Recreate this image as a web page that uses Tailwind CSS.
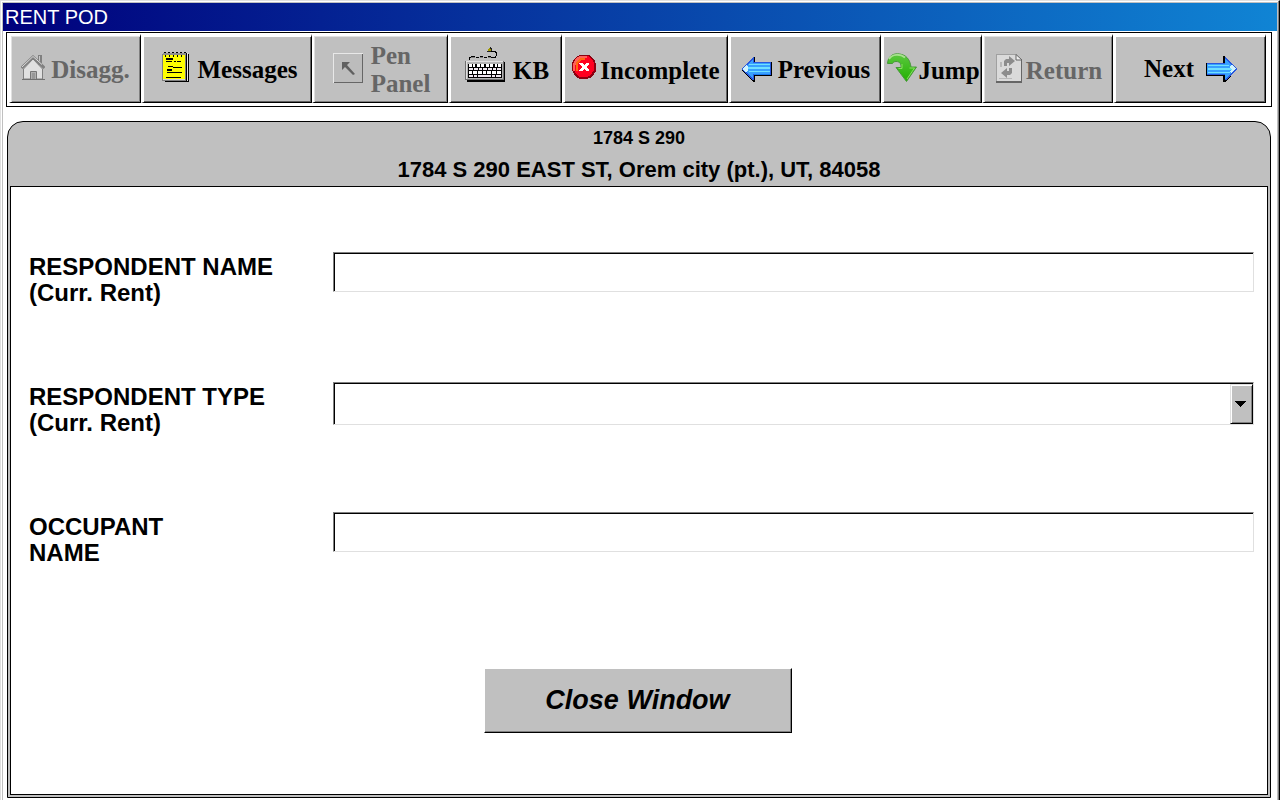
<!DOCTYPE html>
<html lang="en">
<head>
    <meta charset="UTF-8">
    <meta name="viewport" content="width=device-width, initial-scale=1.0">
    <title>RENT POD</title>
    <script src="https://cdn.jsdelivr.net/npm/@tailwindcss/browser@4"></script>
</head>
<body class="min-h-screen flex flex-col bg-white text-black font-['Liberation_Sans',Arial,sans-serif] border-t border-l border-r border-t-[#e0e0e0] border-l-[#e0e0e0] border-r-black">
<div class="flex-1 flex flex-col border-r border-r-[#808080] pt-px pl-px">
<div class="flex-1 flex flex-col border-t border-l border-r border-[#c0c0c0]">

    <!-- Title bar -->
    <header class="h-7 flex items-center pl-0.5 bg-linear-to-r/srgb from-[#00007c] to-[#1084d4]">
        <h1 class="text-white text-[20px] leading-7">RENT POD</h1>
    </header>

    <!-- Toolbar -->
    <nav class="mt-px ml-[3px] mr-[5px] border border-black pt-px pb-[3px] pl-0.5 pr-[5px] grid grid-cols-[132fr_171fr_136fr_114fr_166fr_153fr_101fr_131fr_153fr] auto-rows-[69px] font-['Liberation_Serif','Times_New_Roman',serif] font-bold text-[25px] leading-7 whitespace-nowrap">
        <button disabled class="flex items-center justify-center gap-1.5 bg-[#c0c0c0] text-[#666] border-t-2 border-l-2 border-r border-b border-t-white border-l-white border-r-black border-b-black shadow-[inset_1px_1px_0_#e0e0e0,inset_-1px_-1px_0_#808080]">
            <svg class="shrink-0 -mt-1" width="24" height="25" viewBox="0 0 24 25">
                <path d="M17 0h4v10h-4z" fill="#808080"/>
                <path d="M18 1h1v7h-1z" fill="#c8c8c8"/>
                <path d="M2.500 14L12 4l9.500 10v10h-19z" fill="#e0e0e0" stroke="#808080"/>
                <path d="M0.500 13L12 2 23.500 13" fill="none" stroke="#808080" stroke-width="3"/>
                <path d="M1 12L12 1.500l9 8" fill="none" stroke="#dcdcdc"/>
                <path d="M9.500 16.500h6v8h-6z" fill="#b0b0b0" stroke="#777"/>
                <path d="M11 18h3v6h-3z" fill="#989898"/>
                <path d="M1 24.500h23" stroke="#707070"/>
            </svg>
            <span class="pt-0.5">Disagg.</span>
        </button>
        <button class="flex items-center justify-center gap-2 pl-1 bg-[#c0c0c0] border-t-3 border-l-3 border-r border-b border-t-white border-l-white border-r-black border-b-black shadow-[inset_-1px_-1px_0_#606060]">
            <svg class="shrink-0 -mt-1" width="28" height="31" viewBox="0 0 28 31" shape-rendering="crispEdges">
                <path d="M3 29h23V2h1v28H3z" fill="#000"/>
                <path d="M25 1h1v28h-1z" fill="#e8e8e8"/>
                <path d="M24 1h1v28h-1zM2 29h22v-1H2z" fill="#000"/>
                <path d="M0 2h24v27H0z" fill="#808080"/>
                <path d="M1 3h22v25H1z" fill="#ff0"/>
                <path d="M1 27h22v1H1z" fill="#d8d8d8"/>
                <path d="M1 1h23v2H1z" fill="#909090"/>
                <path d="M2 0h2v1H2zM6 0h2v1H6zM10 0h2v1h-2zM14 0h2v1h-2zM18 0h2v1h-2zM22 0h2v1h-2zM3 3h1v2H3zM7 3h1v2H7zM11 3h1v2h-1zM15 3h1v2h-1zM19 3h1v2h-1z" fill="#000"/>
                <path d="M4 6h7v2H4zM4 9h6v1H4zM12 9h2v1h-2zM15 9h4v1h-4zM6 14h5v1H6zM11 15h9v1h-9zM5 17h5v2H5zM5 20h6v1H5zM11 20h9v1h-9zM4 25h15v1H4z" fill="#000"/>
            </svg>
            <span>Messages</span>
        </button>
        <button disabled class="flex items-center justify-center gap-2 pl-0.5 bg-[#c0c0c0] text-[#666] text-left border-t-2 border-l-2 border-r border-b border-t-white border-l-white border-r-black border-b-black shadow-[inset_1px_1px_0_#e0e0e0,inset_-1px_-1px_0_#808080]">
            <svg class="shrink-0 -mt-0.5" width="30" height="30" viewBox="0 0 30 30">
                <path d="M0 0h30v30H0z" fill="#e8e8e8"/>
                <path d="M1 1h29v29H1z" fill="#666"/>
                <path d="M1 1h28v28H1z" fill="#bcbcbc"/>
                <path d="M9 9h8l-3 3 8 9-2 1-8-8-3 3z" fill="#606060"/>
            </svg>
            <span class="pt-0.5">Pen<br>Panel</span>
        </button>
        <button class="flex items-center justify-center gap-2 pl-0.5 bg-[#c0c0c0] border-t-3 border-l-3 border-r border-b border-t-white border-l-white border-r-black border-b-black shadow-[inset_-1px_-1px_0_#606060]">
            <svg class="shrink-0 -mt-2.5" width="40" height="35" viewBox="0 0 40 35" shape-rendering="crispEdges">
                <path d="M3 13h1v-3h2v1H5v2zM6 9h4v1H6zM11 10h3v1h-3zM15 9h3v1h-3zM19 10h3v1h-3zM23 9h3v1h-3zM26 10h4V9h1V6h-1V5h-4V4h5v1h1v4h-1v2h-5z" fill="#000"/>
                <path d="M6 10h4v1H6zM15 10h3v1h-3zM23 10h3v1h-3z" fill="#808080"/>
                <path d="M23 2h1V1h2v3h-3z" fill="#a09800"/>
                <path d="M25 0h1v2h-1zM26 1h1v3h-1zM22 4h4v1h-4z" fill="#222"/>
                <path d="M2 15h38v20H2z" fill="#000"/>
                <path d="M0 14h39v19H0z" fill="#707070"/>
                <path d="M1 14h37v1H1zM1 15h1v17H1z" fill="#e0e0e0"/>
                <path d="M2 15h36v17H2z" fill="#b4b4b4"/>
                <path d="M3 17h34v14H3z" fill="#000"/>
                <path d="M4 17h3v3H4zM8 17h2v3H8zM12 17h3v3h-3zM16 17h3v3h-3zM21 17h3v3h-3zM25 17h3v3h-3zM30 17h2v3h-2zM33 17h3v3h-3z" fill="#fff"/>
                <path d="M4 21h4v2H4zM9 21h4v2H9zM14 21h3v2h-3zM18 21h4v2h-4zM23 21h4v2h-4zM28 21h3v2h-3zM32 21h4v2h-4z" fill="#f0e8f0"/>
                <path d="M4 24h3v3H4zM8 24h4v3H8zM13 24h4v3h-4zM18 24h3v3h-3zM22 24h4v3h-4zM27 24h4v3h-4zM32 24h4v3h-4z" fill="#fff"/>
                <path d="M4 28h4v2H4zM9 28h3v2H9zM13 28h13v2H13zM27 28h3v2h-3zM31 28h5v2h-5z" fill="#f0e8f0"/>
            </svg>
            <span class="pt-0.5">KB</span>
        </button>
        <button class="flex items-center justify-center gap-1 bg-[#c0c0c0] border-t-3 border-l-3 border-r border-b border-t-white border-l-white border-r-black border-b-black shadow-[inset_-1px_-1px_0_#606060]">
            <svg class="shrink-0 -mt-1.5" width="24" height="24" viewBox="0 0 24 24" shape-rendering="crispEdges">
                <path d="M8 0h9l5 4 2 5v7l-4 6-5 2H8l-5-3-3-6V8l3-5z" fill="#8c0010"/>
                <path d="M8 1h8l5 4 1 4v6l-3 5-4 2H8l-4-3-2-5V8l2-4z" fill="#ff0020"/>
                <path d="M8 1h7v2H9L5 6 3 11v5H1V9l3-6z" fill="#ff6058"/>
                <path d="M8 3h5v2H9L6 8v8H4V8z" fill="#ff6a10"/>
                <path d="M7 8h3l2 2 3-2h2v1l-3 3 3 3v1h-3l-2-2-2 2H7v-1l3-3-3-3z" fill="#fff"/>
            </svg>
            <span class="pt-0.5">Incomplete</span>
        </button>
        <button class="flex items-center justify-center gap-1.5 bg-[#c0c0c0] border-t-3 border-l-3 border-r border-b border-t-white border-l-white border-r-black border-b-black shadow-[inset_-1px_-1px_0_#606060]">
            <svg class="shrink-0 -mt-0.5" width="31" height="26" viewBox="0 0 31 26" shape-rendering="crispEdges">
                <path d="M1 14l11 12h2v-6h17V6H14V0z" fill="#000"/>
                <path d="M0 13L12 1h1v5h17v13H13v5h-1z" fill="#2858e0"/>
                <path d="M2 13L12 3v4h17v11H12v5z" fill="#38a0ff"/>
                <path d="M8 8h21v1H8zM6 11h23v2H6zM8 15h21v1H8z" fill="#70e0ff"/>
                <path d="M1 13l4-4 2 1v5l-2 1z" fill="#d0f4ff"/>
                <path d="M13 18h16v1H13z" fill="#1878f0"/>
            </svg>
            <span>Previous</span>
        </button>
        <button class="flex items-center justify-center gap-px pl-0.5 bg-[#c0c0c0] border-t-3 border-l-3 border-r border-b border-t-white border-l-white border-r-black border-b-black shadow-[inset_-1px_-1px_0_#606060]">
            <svg class="shrink-0 -mt-1" width="30" height="29" viewBox="0 0 30 29">
                <defs>
                    <linearGradient id="green" x1="0" y1="0" x2="0" y2="1">
                        <stop offset="0" stop-color="#5cc840"/>
                        <stop offset="1" stop-color="#22b000"/>
                    </linearGradient>
                </defs>
                <path d="M0.500 10.500C1 4 5 0.500 11 0.800c8 0.500 12 5.500 13 13.200h5.500L19.500 28.500 9 14.500h5c0.300-3.500-1-6-5-6-2 0-3 1-3.500 2z" fill="url(#green)" stroke="#48983a"/>
                <path d="M2 6C5 1 13 0.500 18 4.500" fill="none" stroke="#a8e090" stroke-width="2"/>
                <path d="M11.500 15.500h3.500V11M22.500 15h5L20 26" fill="none" stroke="#88e060"/>
            </svg>
            <span class="pt-0.5">Jump</span>
        </button>
        <button disabled class="flex items-center justify-center gap-1 pl-0.5 bg-[#c0c0c0] text-[#666] border-t-2 border-l-2 border-r border-b border-t-white border-l-white border-r-black border-b-black shadow-[inset_1px_1px_0_#e0e0e0,inset_-1px_-1px_0_#808080]">
            <svg class="shrink-0 -mt-0.5" width="26" height="29" viewBox="0 0 26 29">
                <path d="M0 0h20l6 6v23H0z" fill="#a0a0a0"/>
                <path d="M1 1h19l5 5v21H1z" fill="#dadada"/>
                <path d="M0 27h26v2H0zM25 6h1v23h-1z" fill="#666"/>
                <path d="M20 0.500v5.500h6z" fill="#f0f0f0" stroke="#666"/>
                <path d="M8 12V7l2-2h3V2l6 5-6 5V9h-2v3z" fill="#8c8c8c"/>
                <path d="M16 14v5l-2 2h-3v3l-6-5 6-5v3h2v-3z" fill="#8c8c8c"/>
                <path d="M4 8h2v5H4zM3 24h13v1H3z" fill="#b8b8b8"/>
            </svg>
            <span class="pt-1">Return</span>
        </button>
        <button class="flex items-center justify-center gap-3 bg-[#c0c0c0] border-t-3 border-l-3 border-r border-b border-t-white border-l-white border-r-black border-b-black shadow-[inset_-1px_-1px_0_#606060]">
            <span class="-mt-0.5">Next</span>
            <svg class="shrink-0 -mt-0.5" width="31" height="26" viewBox="0 0 31 26" shape-rendering="crispEdges">
                <path d="M17 0h2l12 13-11 13h-3v-6H0V7h17z" fill="#000"/>
                <path d="M19 1l12 12-11 11h-1v-5H1V7h18z" fill="#2858e0"/>
                <path d="M19 3l10 10-10 10v-5H1V8h18z" fill="#38a0ff"/>
                <path d="M2 9h21v1H2zM2 12h24v2H2zM2 16h22v1H2z" fill="#70e0ff"/>
                <path d="M30 13l-4-4-2 1v2l2 1-2 2 1 2z" fill="#d0f4ff"/>
            </svg>
        </button>
    </nav>

    <!-- Address panel -->
    <main class="flex-1 flex flex-col mt-3.5 ml-1 mr-1.5 mb-0.5 px-0.5 pb-0.5 bg-[#c0c0c0] border border-black rounded-t-[16px]">
        <div class="h-16 pt-0.5 text-center font-bold">
            <p class="text-[18px] leading-7">1784 S 290</p>
            <h2 class="text-[22px] leading-9">1784 S 290 EAST ST, Orem city (pt.), UT, 84058</h2>
        </div>

        <form class="flex-1 bg-white border border-black pt-[65px] pl-[18px] pr-[13px] pb-15">
            <div class="grid grid-cols-[304px_1fr] auto-rows-[130px] items-start">
                <label for="respondent-name" class="pt-0.5 text-[24px] leading-[26px] font-bold">RESPONDENT NAME<br>(Curr. Rent)</label>
                <input type="text" id="respondent-name" class="w-full h-10 px-2 text-[24px] bg-white outline-none border border-t-[#808080] border-l-[#808080] border-r-[#e0e0e0] border-b-[#e0e0e0] shadow-[inset_1px_1px_0_#000]">

                <label for="respondent-type" class="pt-0.5 text-[24px] leading-[26px] font-bold">RESPONDENT TYPE<br>(Curr. Rent)</label>
                <div class="relative">
                    <select id="respondent-type" class="block w-full h-[43px] px-2 text-[24px] appearance-none bg-white outline-none border border-t-[#808080] border-l-[#808080] border-r-[#e0e0e0] border-b-[#e0e0e0] shadow-[inset_1px_1px_0_#000]">
                        <option value=""></option>
                    </select>
                    <span class="absolute top-0.5 bottom-px right-px w-[23px] flex items-center justify-center pr-0.5 pointer-events-none bg-[#c0c0c0] border border-t-[#e0e0e0] border-l-[#e0e0e0] border-r-black border-b-black shadow-[inset_1px_1px_0_#fff,inset_-1px_-1px_0_#808080]">
                        <svg width="11" height="6" viewBox="0 0 11 6" shape-rendering="crispEdges"><path d="M0 0h11L5.500 6z" fill="#000"/></svg>
                    </span>
                </div>

                <label for="occupant-name" class="pt-0.5 text-[24px] leading-[26px] font-bold">OCCUPANT<br>NAME</label>
                <input type="text" id="occupant-name" class="w-full h-10 px-2 text-[24px] bg-white outline-none border border-t-[#808080] border-l-[#808080] border-r-[#e0e0e0] border-b-[#e0e0e0] shadow-[inset_1px_1px_0_#000]">
            </div>

            <div class="flex justify-center pt-[26px] pr-2">
                <button type="button" class="w-[308px] h-[65px] bg-[#c0c0c0] text-[27px] font-bold italic border border-t-white border-l-white border-r-black border-b-black shadow-[inset_-1px_-1px_0_#808080]">Close Window</button>
            </div>
        </form>
    </main>

</div>
</div>
</body>
</html>
